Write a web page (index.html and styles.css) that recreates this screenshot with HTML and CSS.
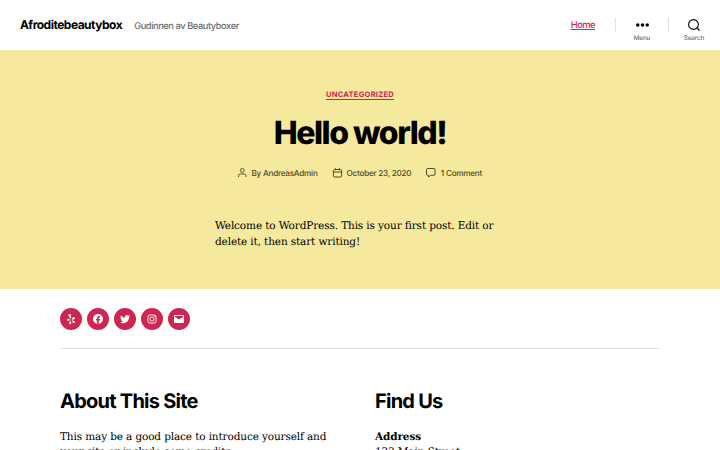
FILE: index.html
```html
<!DOCTYPE html>
<html lang="en">
<head>
    <meta charset="UTF-8">
    <meta name="viewport" content="width=device-width, initial-scale=1.0">
    <title>Afroditebeautybox</title>
    <link rel="stylesheet" href="styles.css">
</head>
<body>

    <header class="site-header">
        <div class="header-titles">
            <div class="site-title">Afroditebeautybox</div>
            <div class="site-description">Gudinnen av Beautyboxer</div>
        </div>
        <nav class="primary-menu">
            <a href="#">Home</a>
        </nav>
        <div class="header-toggles">
            <button class="toggle">
                <svg class="icon-dots" viewBox="0 0 26 7"><circle cx="3.5" cy="3.5" r="3.5"/><circle cx="13" cy="3.5" r="3.5"/><circle cx="22.5" cy="3.5" r="3.5"/></svg>
                <span class="toggle-text">Menu</span>
            </button>
            <button class="toggle">
                <svg class="icon-search" viewBox="0 0 24 24"><circle cx="11" cy="11" r="9.8"/><path d="M18 18l5 5"/></svg>
                <span class="toggle-text">Search</span>
            </button>
        </div>
    </header>

    <main class="post">
        <div class="entry-categories"><a href="#">Uncategorized</a></div>
        <h1 class="entry-title">Hello world!</h1>
        <ul class="post-meta">
            <li>
                <svg class="icon-user" viewBox="0 0 18 20"><path d="M17 19v-2.2a4.3 4.3 0 0 0-4.3-4.3H5.3A4.3 4.3 0 0 0 1 16.8V19"/><circle cx="9" cy="5" r="4"/></svg>
                By AndreasAdmin
            </li>
            <li>
                <svg class="icon-date" viewBox="0 0 18 19"><path d="M3 3h12a2.2 2.2 0 0 1 2.2 2.2v10.6a2.2 2.2 0 0 1-2.2 2.2H3a2.2 2.2 0 0 1-2.2-2.2V5.2A2.2 2.2 0 0 1 3 3zM1 8h16M5 .5v4M13 .5v4"/></svg>
                October 23, 2020
            </li>
            <li>
                <svg class="icon-comment" viewBox="0 0 19 19"><path d="M3 1h13a2 2 0 0 1 2 2v9.5a2 2 0 0 1-2 2H9.5L5 18v-3.5H3a2 2 0 0 1-2-2V3a2 2 0 0 1 2-2z"/></svg>
                1 Comment
            </li>
        </ul>
        <p class="entry-content">Welcome to WordPress. This is your first post. Edit or delete it, then start writing!</p>
    </main>

    <footer class="footer">
        <ul class="social">
            <li><svg viewBox="0 0 24 24"><path d="M12.271,16.718v1.417q-.011,3.257-.067,3.4a.707.707,0,0,1-.569.446,4.637,4.637,0,0,1-2.024-.424A4.609,4.609,0,0,1,7.8,20.565a.844.844,0,0,1-.19-.4.692.692,0,0,1,.044-.29,3.181,3.181,0,0,1,.379-.524q.335-.412,2.019-2.409.011,0,.669-.781a.757.757,0,0,1,.44-.274.965.965,0,0,1,.552.039.945.945,0,0,1,.418.324A.732.732,0,0,1,12.271,16.718Zm-1.662-2.8a.783.783,0,0,1-.58.781l-1.339.435q-3.067.981-3.257.981a.711.711,0,0,1-.6-.4,2.636,2.636,0,0,1-.19-.836,9.134,9.134,0,0,1,.011-1.857,3.559,3.559,0,0,1,.335-1.389.659.659,0,0,1,.625-.357,22.629,22.629,0,0,1,2.253.859q.781.324,1.283.524l.937.379a.771.771,0,0,1,.4.34A.982.982,0,0,1,10.609,13.917Zm9.213,3.313a4.467,4.467,0,0,1-1.021,1.8,4.559,4.559,0,0,1-1.512,1.417.671.671,0,0,1-.7-.078q-.156-.112-2.052-3.2l-.524-.859a.761.761,0,0,1-.128-.513.957.957,0,0,1,.217-.513.774.774,0,0,1,.926-.29q.011.011,1.327.446,2.264.736,2.7.887a2.082,2.082,0,0,1,.524.229.673.673,0,0,1,.245.68Zm-7.5-7.049q.056,1.137-.6,1.361-.647.19-1.272-.792L6.237,4.08a.7.7,0,0,1,.212-.691,5.788,5.788,0,0,1,2.314-1,5.928,5.928,0,0,1,2.5-.352.681.681,0,0,1,.547.5q.034.2.245,3.407T12.327,10.181Zm7.384,1.2a.679.679,0,0,1-.29.658q-.167.112-3.67.959-.747.167-1.015.257l.011-.022a.769.769,0,0,1-.513-.044.914.914,0,0,1-.413-.357.786.786,0,0,1,0-.971q.011-.011.836-1.137,1.394-1.908,1.673-2.275a2.423,2.423,0,0,1,.379-.435A.7.7,0,0,1,17.435,8a4.482,4.482,0,0,1,1.372,1.489,4.81,4.81,0,0,1,.9,1.868v.034Z"/></svg></li>
            <li><svg viewBox="0 0 24 24"><path d="M12 2C6.5 2 2 6.5 2 12c0 5 3.7 9.1 8.4 9.9v-7H7.9V12h2.5V9.8c0-2.5 1.5-3.9 3.8-3.9 1.1 0 2.2.2 2.2.2v2.5h-1.3c-1.2 0-1.6.8-1.6 1.6V12h2.8l-.4 2.9h-2.3v7C18.3 21.1 22 17 22 12c0-5.5-4.5-10-10-10z"/></svg></li>
            <li><svg viewBox="0 0 24 24"><path d="M22.23,5.924c-.736.326-1.527.547-2.357.646.847-.508 1.498-1.312 1.804-2.27-.793.47-1.671.812-2.606.996C18.324,4.498 17.257,4 16.077,4c-2.266 0-4.103 1.837-4.103 4.103 0 .322.036.635.106.935-3.41-.171-6.433-1.804-8.457-4.287-.353.606-.556 1.311-.556 2.063 0 1.424.724 2.679 1.825 3.415-.673-.021-1.305-.206-1.859-.513v.052c0 1.988 1.414 3.647 3.292 4.023-.344.095-.707.145-1.081.145-.264 0-.521-.026-.772-.074.522 1.63 2.038 2.817 3.833 2.85-1.404 1.1-3.174 1.757-5.096 1.757-.332 0-.66-.02-.979-.057 1.816 1.164 3.973 1.843 6.29 1.843 7.547 0 11.675-6.252 11.675-11.675 0-.178-.004-.355-.012-.531C20.985 7.47 21.68 6.747 22.23 5.924z"/></svg></li>
            <li><svg viewBox="0 0 24 24"><g fill="none" stroke="#fff" stroke-width="1.8"><rect x="3.9" y="3.9" width="16.2" height="16.2" rx="4.2"/><circle cx="12" cy="12" r="4.2"/></g><circle cx="17.3" cy="6.7" r="1.2"/></svg></li>
            <li><svg viewBox="0 0 24 24"><path d="M20,4H4C2.895,4 2,4.895 2,6v12c0 1.105.895 2 2 2h16c1.105 0 2-.895 2-2V6C22 4.895 21.105 4 20 4zM20 8.236l-8 4.882L4 8.236V6h16V8.236z"/></svg></li>
        </ul>
        <div class="footer-widgets">
            <section class="widget">
                <h2>About This Site</h2>
                <p>This may be a good place to introduce yourself and your site or include some credits.</p>
            </section>
            <section class="widget">
                <h2>Find Us</h2>
                <p><strong>Address</strong><br>123 Main Street</p>
            </section>
        </div>
    </footer>

</body>
</html>
```
FILE: styles.css
```css
html {
    height: 100%;
    overflow: hidden;
}
body {
    font-family: Inter, sans-serif;
    text-rendering: geometricPrecision;
    background-color: #fff;
    color: #000;
    margin: 0;
    height: 100%;
    overflow: hidden;
}
h1, h2, p, ul {
    margin: 0;
    padding: 0;
}
ul {
    list-style: none;
}
.site-header {
    display: flex;
    align-items: center;
    height: 50px;
    padding-left: 20px;
}
.header-titles {
    display: flex;
    align-items: baseline;
    gap: 12px;
    flex: 1;
    padding-bottom: 2px;
}
.site-title {
    font-size: 12px;
    font-weight: 700;
    letter-spacing: -0.5px;
}
.site-description {
    font-size: 9.3px;
    font-weight: 450;
    letter-spacing: -0.44px;
    color: #6d6d6d;
}
.primary-menu {
    margin: 0 20px 6px 0;
}
.primary-menu a {
    font-size: 9.3px;
    font-weight: 450;
    letter-spacing: -0.5px;
    color: #cd2653;
}
.header-toggles {
    display: flex;
    height: 50px;
}
.toggle {
    position: relative;
    display: flex;
    flex-direction: column;
    align-items: center;
    justify-content: center;
    width: 52px;
    padding: 0;
    border: none;
    background: none;
    cursor: pointer;
    text-rendering: inherit;
}
.toggle:first-child {
    width: 53px;
    padding-left: 1px;
}
/* short divider on the left of each toggle */
.toggle::before {
    content: "";
    position: absolute;
    left: 0;
    top: 18px;
    width: 1px;
    height: 14px;
    background-color: #dedfdf;
}
.icon-dots {
    width: 13px;
    height: 4px;
}
.icon-search {
    width: 12px;
    height: 12px;
    fill: none;
    stroke: #000;
    stroke-width: 2.2;
}
.toggle-text {
    position: absolute;
    top: 35px;
    font-family: Inter, sans-serif;
    font-size: 6.3px;
    line-height: 7px;
    font-weight: 500;
    letter-spacing: -0.1px;
    color: #6d6d6d;
}
.post {
    box-sizing: border-box;
    height: 239.4px;
    padding-top: 40px;
    background-color: #f5e99e;
    text-align: center;
}
.entry-categories {
    display: flex;
    justify-content: center;
    height: 10px;
}
.entry-categories a {
    height: 9px;
    line-height: 9px;
    border-bottom: 1px solid #cd2653;
    font-size: 7.5px;
    font-weight: 700;
    letter-spacing: 0.27px;
    text-transform: uppercase;
    text-decoration: none;
    color: #cd2653;
}
.entry-title {
    margin-top: 15px;
    font-size: 32px;
    font-weight: 800;
    line-height: 36px;
    letter-spacing: -1.47px;
}
.post-meta {
    display: flex;
    justify-content: center;
    gap: 15px;
    margin-top: 16px;
    font-size: 8.2px;
    line-height: 12px;
    font-weight: 500;
    letter-spacing: -0.27px;
    color: #4f4b22;
}
.post-meta li {
    display: flex;
    align-items: center;
    gap: 5px;
}
.post-meta svg {
    height: 9.5px;
    fill: none;
    stroke: #4f4b22;
    stroke-width: 2;
    overflow: visible;
}
.entry-content {
    width: 290px;
    margin: 39px auto 0;
    font-family: "DejaVu Serif", serif;
    font-size: 10.5px;
    line-height: 16px;
    letter-spacing: -0.13px;
    text-align: left;
}
.footer {
    padding: 18.5px 60px 0;
}
.social {
    display: flex;
    gap: 5px;
    padding-bottom: 18px;
    border-bottom: 1px solid #dedfdf;
}
.social li {
    display: flex;
    align-items: center;
    justify-content: center;
    width: 22px;
    height: 22px;
    border-radius: 50%;
    background-color: #cd2653;
}
.social svg {
    width: 12px;
    height: 12px;
    fill: #fff;
}
.footer-widgets {
    display: grid;
    grid-template-columns: 1fr 1fr;
    gap: 30px;
    padding-top: 40px;
}
.widget h2 {
    margin-bottom: 16px;
    font-size: 20px;
    font-weight: 700;
    line-height: 25px;
    letter-spacing: -0.75px;
}
.widget p {
    font-family: "DejaVu Serif", serif;
    font-size: 10.5px;
    line-height: 15px;
    letter-spacing: -0.13px;
}
```
